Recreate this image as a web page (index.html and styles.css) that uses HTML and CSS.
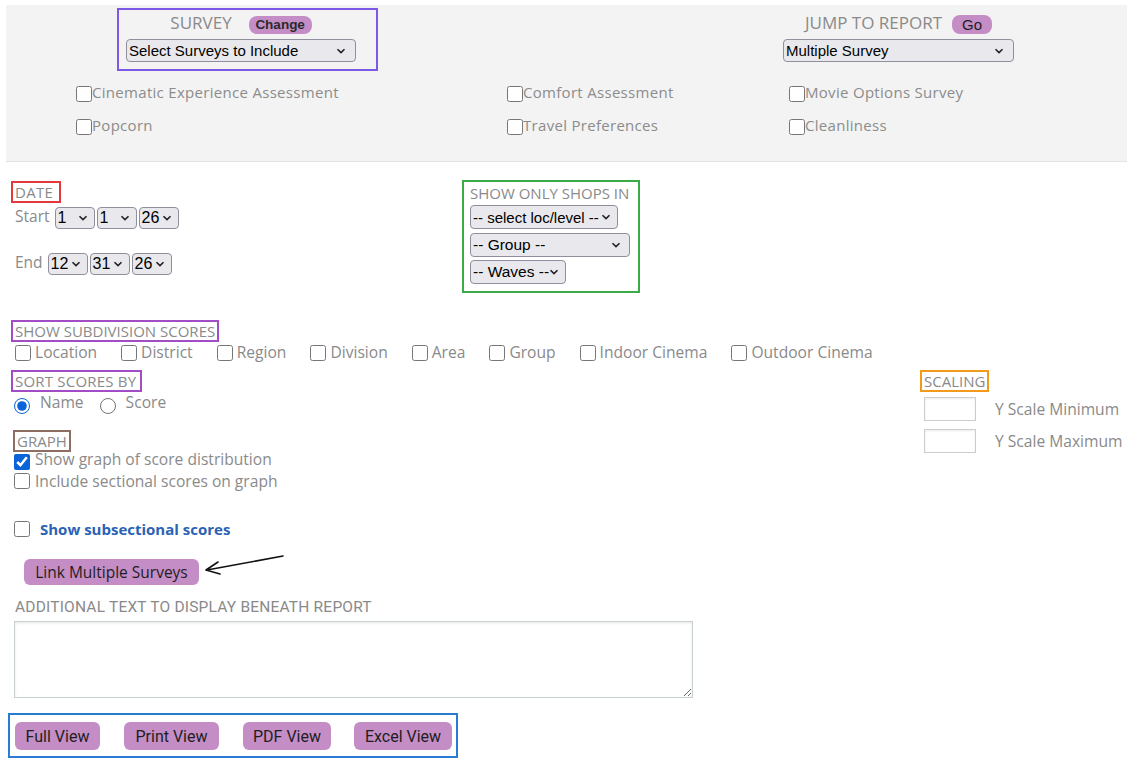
FILE: index.html
```html
<!DOCTYPE html>
<html>
<head>
<meta charset="utf-8">
<link rel="stylesheet" href="styles.css">
</head>
<body>
<div class="panel">
  <div class="panel-head">
    <div class="survey-box">
      <div class="title-row"><span class="title">SURVEY</span><span class="pill pill-change">Change</span></div>
      <div class="sel sel-survey"><span>Select Surveys to Include</span><svg class="chev" viewBox="0 0 10 6"><path d="M1.5 1.2 L5 4.6 L8.5 1.2"/></svg></div>
    </div>
    <div class="jump">
      <div class="title-row"><span class="title">JUMP TO REPORT</span><span class="pill pill-go">Go</span></div>
      <div class="sel sel-jump"><span>Multiple Survey</span><svg class="chev" viewBox="0 0 10 6"><path d="M1.5 1.2 L5 4.6 L8.5 1.2"/></svg></div>
    </div>
  </div>
  <div class="survey-grid">
    <label class="sv"><input type="checkbox"><span>Cinematic Experience Assessment</span></label>
    <label class="sv"><input type="checkbox"><span>Comfort Assessment</span></label>
    <label class="sv"><input type="checkbox"><span>Movie Options Survey</span></label>
    <label class="sv"><input type="checkbox"><span>Popcorn</span></label>
    <label class="sv"><input type="checkbox"><span>Travel Preferences</span></label>
    <label class="sv"><input type="checkbox"><span>Cleanliness</span></label>
  </div>
</div>

<div class="main">
  <div class="row-dates">
    <div class="date-col">
      <div class="tag tag-red tag-date">DATE</div>
      <div class="date-line date-start">
        <span class="dl">Start</span>
        <div class="sel sel-sm"><span>1</span><svg class="chev" viewBox="0 0 10 6"><path d="M1.5 1.2 L5 4.6 L8.5 1.2"/></svg></div>
        <div class="sel sel-sm"><span>1</span><svg class="chev" viewBox="0 0 10 6"><path d="M1.5 1.2 L5 4.6 L8.5 1.2"/></svg></div>
        <div class="sel sel-sm"><span>26</span><svg class="chev" viewBox="0 0 10 6"><path d="M1.5 1.2 L5 4.6 L8.5 1.2"/></svg></div>
      </div>
      <div class="date-line date-end">
        <span class="dl">End</span>
        <div class="sel sel-sm"><span>12</span><svg class="chev" viewBox="0 0 10 6"><path d="M1.5 1.2 L5 4.6 L8.5 1.2"/></svg></div>
        <div class="sel sel-sm"><span>31</span><svg class="chev" viewBox="0 0 10 6"><path d="M1.5 1.2 L5 4.6 L8.5 1.2"/></svg></div>
        <div class="sel sel-sm"><span>26</span><svg class="chev" viewBox="0 0 10 6"><path d="M1.5 1.2 L5 4.6 L8.5 1.2"/></svg></div>
      </div>
    </div>
    <div class="shops">
      <div class="shops-title">SHOW ONLY SHOPS IN</div>
      <div class="sel sel-loc"><span>-- select loc/level --</span><svg class="chev" viewBox="0 0 10 6"><path d="M1.5 1.2 L5 4.6 L8.5 1.2"/></svg></div>
      <div class="sel sel-group"><span>-- Group --</span><svg class="chev" viewBox="0 0 10 6"><path d="M1.5 1.2 L5 4.6 L8.5 1.2"/></svg></div>
      <div class="sel sel-waves"><span>-- Waves --</span><svg class="chev" viewBox="0 0 10 6"><path d="M1.5 1.2 L5 4.6 L8.5 1.2"/></svg></div>
    </div>
  </div>

  <div class="tag tag-purple tag-subdiv">SHOW SUBDIVISION SCORES</div>
  <div class="subdiv-row">
    <label class="opt"><input type="checkbox"><span>Location</span></label>
    <label class="opt"><input type="checkbox"><span>District</span></label>
    <label class="opt"><input type="checkbox"><span>Region</span></label>
    <label class="opt"><input type="checkbox"><span>Division</span></label>
    <label class="opt"><input type="checkbox"><span>Area</span></label>
    <label class="opt"><input type="checkbox"><span>Group</span></label>
    <label class="opt"><input type="checkbox"><span>Indoor Cinema</span></label>
    <label class="opt"><input type="checkbox"><span>Outdoor Cinema</span></label>
  </div>

  <div class="row-sort">
    <div class="sort-col">
      <div class="tag tag-purple tag-sort">SORT SCORES BY</div>
      <div class="radio-row">
        <label class="rad"><input type="radio" name="sort" checked><span>Name</span></label>
        <label class="rad"><input type="radio" name="sort"><span>Score</span></label>
      </div>
      <div class="tag tag-brown tag-graph">GRAPH</div>
      <label class="gline gline-1"><input type="checkbox" checked><span>Show graph of score distribution</span></label>
      <label class="gline gline-2"><input type="checkbox"><span>Include sectional scores on graph</span></label>
    </div>
    <div class="scale-col">
      <div class="tag tag-orange">SCALING</div>
      <div class="scale-line"><input type="text" class="scale-in"><span>Y Scale Minimum</span></div>
      <div class="scale-line"><input type="text" class="scale-in"><span>Y Scale Maximum</span></div>
    </div>
  </div>

  <label class="subsec"><input type="checkbox"><span>Show subsectional scores</span></label>

  <div class="link-row">
    <button class="btn btn-link">Link Multiple Surveys</button>
    <svg class="arrow" viewBox="0 0 84 26" width="84" height="26"><path d="M81 3 L5 17 M16 9 L4 17 L18 21" /></svg>
  </div>

  <div class="add-label">ADDITIONAL TEXT TO DISPLAY BENEATH REPORT</div>
  <textarea class="add-text"></textarea>

  <div class="views">
    <button class="btn btn-view w-full">Full View</button>
    <button class="btn btn-view w-print">Print View</button>
    <button class="btn btn-view w-pdf">PDF View</button>
    <button class="btn btn-view w-excel">Excel View</button>
  </div>
</div>
</body>
</html>
```
FILE: styles.css
```css
* { box-sizing: border-box; }
html, body { margin: 0; padding: 0; background: #fff; }
body {
  font-family: "Open Sans", "DejaVu Sans", sans-serif;
  color: #8a8a8a;
  width: 1134px;
  height: 765px;
  overflow: hidden;
}
input[type="checkbox"], input[type="radio"] {
  width: 16px; height: 16px; margin: 0; flex: none;
  accent-color: #0b63d8;
}

/* top panel */
.panel {
  margin: 5px 7px 0 6px;
  height: 157px;
  background: #f3f3f3;
  border-bottom: 1px solid #e3e3e3;
}
.panel-head {
  display: flex;
  padding: 3px 0 0 111px;
}
.survey-box {
  width: 261px;
  height: 63px;
  border: 2px solid #7b58e6;
  padding: 5px 0 0 7px;
}
.title-row {
  width: 230px;
  height: 19px;
  display: flex;
  justify-content: center;
  align-items: center;
  gap: 17px;
}
.title { font-size: 17px; line-height: 19px; color: #8a8a8a; position: relative; top: -2px; }
.jump .title-row { width: 231px; gap: 10px; }
.pill {
  background: #c48dc5;
  color: #1e1e1e;
  font-family: "Liberation Sans", Arial, sans-serif;
  font-size: 14px;
  border-radius: 8px;
  display: flex; align-items: center; justify-content: center;
}
.pill-change { width: 63px; height: 18px; font-weight: bold; font-size: 13.5px; color: #2a2a2a; }
.pill-go { width: 40px; height: 19px; font-size: 15px; }
.jump {
  margin-left: auto;
  margin-right: 113px;
  margin-top: 7px;
}

.sel {
  display: flex;
  align-items: center;
  justify-content: space-between;
  height: 23px;
  background: #e9e9ed;
  border: 1px solid #8f8f9d;
  border-radius: 4px;
  padding: 0 7px 0 2px;
  font-family: "Liberation Sans", Arial, sans-serif;
  font-size: 15px;
  color: #000;
  white-space: nowrap;
}
.chev { width: 10px; height: 6px; flex: none; }
.chev path { fill: none; stroke: #222; stroke-width: 1.6; }
.sel-survey { width: 230px; margin-top: 5px; padding-right: 9px; }
.sel-jump { width: 231px; margin-top: 5px; padding-right: 9px; }

.survey-grid {
  display: grid;
  grid-template-columns: 431px 282px auto;
  grid-auto-rows: 33px;
  padding-left: 70px;
  margin-top: 15px;
}
.sv { display: flex; align-items: flex-start; height: 16px; }
.sv span { font-size: 15px; line-height: 14px; color: #8c8c8c; letter-spacing: 0.3px; position: relative; top: -1px; }

/* main */
.main { padding-left: 11px; }
.row-dates { display: flex; margin-top: 18px; }
.date-col { width: 451px; padding-top: 1px; }
.tag {
  display: inline-block;
  border: 2px solid;
  padding: 0 2px;
  font-size: 15px;
  line-height: 18px;
  color: #8a8a8a;
}
.tag-date { padding-right: 6px; letter-spacing: 0.3px; }
.tag-sort { padding-right: 4px; letter-spacing: 0.2px; }
.tag-red { border-color: #e53a3a; }
.tag-purple { border-color: #a24cc6; }
.tag-brown { border-color: #8d6e63; }
.tag-orange { border-color: #f39a1b; }
.date-line { display: flex; align-items: flex-start; padding-left: 4px; gap: 2px; }
.dl { font-size: 15.5px; line-height: 18px; margin-right: 3px; color: #8a8a8a; }
.date-start { margin-top: 4px; }
.date-end { margin-top: 24px; }
.sel-sm { width: 40px; height: 22px; padding-right: 6px; font-size: 16px; }

.shops {
  width: 178px;
  height: 113px;
  border: 2px solid #3aab47;
  padding: 2px 0 0 6px;
}
.shops-title { font-size: 15px; line-height: 19px; }
.sel-loc { width: 148px; height: 24px; margin-top: 2px; font-size: 15px; padding-right: 6px; }
.sel-group { width: 160px; height: 24px; margin-top: 4px; font-size: 15.5px; padding-right: 8px; }
.sel-waves { width: 96px; height: 24px; margin-top: 3px; font-size: 15.5px; }

.tag-subdiv { margin-top: 27px; }
.subdiv-row { display: flex; gap: 24px; padding-left: 4px; margin-top: 3px; }
.opt { display: flex; align-items: center; height: 16px; }
.opt span { margin-left: 4px; font-size: 15.6px; line-height: 16px; position: relative; top: -1px; }

.row-sort { display: flex; margin-top: 9px; }
.sort-col { width: 909px; }
.radio-row { display: flex; padding-left: 3px; margin-top: 1px; }
.rad { display: flex; align-items: flex-start; margin-right: 16px; }
.rad input { margin-top: 5px; }
.rad span { margin-left: 10px; font-size: 15.6px; line-height: 18px; }
.tag-graph { margin-top: 16px; margin-left: 2px; }
.gline { display: flex; align-items: flex-start; height: 21px; padding-left: 3px; }
.gline span { margin-left: 5px; font-size: 15.6px; line-height: 17px; position: relative; }
.gline-1 { padding-top: 2px; }
.gline-1 span { top: -3px; }
.gline-2 { padding-top: 0; }
.gline-2 span { top: 0; }

.scale-line { display: flex; align-items: center; margin-left: 4px; }
.scale-line:nth-child(2) { margin-top: 5px; }
.scale-line:nth-child(3) { margin-top: 8px; }
.scale-in {
  width: 52px; height: 24px;
  border: 1px solid #c9cfcf;
  background: #fff;
  box-shadow: inset 0 1px 3px rgba(0,0,0,0.08);
  margin: 0;
}
.scale-line span { margin-left: 19px; font-size: 15.6px; }

.subsec { display: flex; align-items: center; height: 20px; margin-top: 25px; padding-left: 3px; }
.subsec span { margin-left: 10px; font-size: 15px; font-weight: bold; color: #2a62b4; }

.link-row { display: flex; align-items: flex-start; margin-top: 20px; margin-left: 13px; }
.btn {
  border: none;
  background: #c48dc5;
  border-radius: 6px;
  color: #1e1e1e;
  cursor: pointer;
  padding: 0;
}
.btn-link { width: 175px; height: 26px; font-family: "Open Sans", sans-serif; font-size: 15.5px; }
.arrow { margin-left: 3px; margin-top: -6px; }
.arrow path { fill: none; stroke: #111; stroke-width: 1.6; stroke-linecap: round; stroke-linejoin: round; }

.add-label {
  font-family: Roboto, "Liberation Sans", sans-serif;
  font-size: 15.5px;
  letter-spacing: 0.2px;
  line-height: 18px;
  color: #8a8a8a;
  margin-top: 13px;
  margin-left: 4px;
}
.add-text {
  display: block;
  width: 679px;
  height: 77px;
  margin: 5px 0 0 3px;
  border: 1px solid #c8d0d0;
  box-shadow: inset 0 1px 3px rgba(0,0,0,0.1);
  resize: both;
}
.views {
  display: flex;
  width: 450px;
  height: 45px;
  margin: 15px 0 0 -3px;
  border: 2px solid #2b7bd2;
  padding: 7px 0 0 5px;
  gap: 24px;
}
.btn-view { height: 28px; font-family: Roboto, "Liberation Sans", sans-serif; font-size: 16px; }
.w-full { width: 85px; }
.w-print { width: 95px; }
.w-pdf { width: 88px; }
.w-excel { width: 98px; margin-left: -1px; }
```
